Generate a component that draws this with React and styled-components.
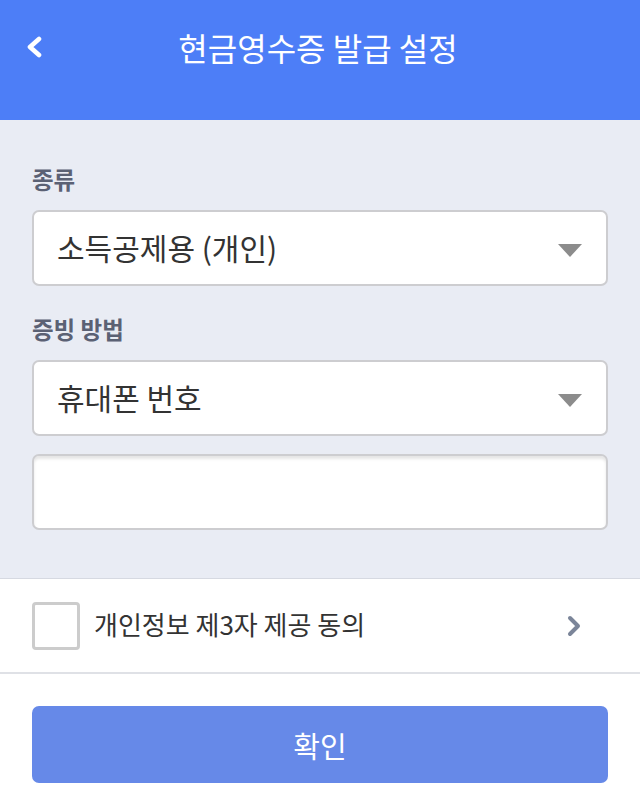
import React from 'react';
import styled, { createGlobalStyle } from 'styled-components';

const GlobalStyle = createGlobalStyle`
  html, body {
    margin: 0;
    padding: 0;
    background: #ffffff;
    font-family: "Noto Sans CJK KR", "Noto Sans", sans-serif;
  }
  * {
    box-sizing: border-box;
  }
`;

export default function App() {
  return (
    <Page>
      <GlobalStyle />
      <Header>
        <HeaderBar>
          <BackButton aria-label="뒤로">
            <svg width="20" height="22" viewBox="0 0 20 22">
              <polyline
                points="14,3 5,11 14,19"
                fill="none"
                stroke="#ffffff"
                strokeWidth="4.6"
                strokeLinecap="round"
                strokeLinejoin="round"
              />
            </svg>
          </BackButton>
          <Title>현금영수증 발급 설정</Title>
          <span />
        </HeaderBar>
      </Header>

      <Form>
        <Label>종류</Label>
        <Select>
          <SelectText>소득공제용 (개인)</SelectText>
          <Caret />
        </Select>

        <Label $spaced>증빙 방법</Label>
        <Select>
          <SelectText>휴대폰 번호</SelectText>
          <Caret />
        </Select>
        <TextInput type="tel" />
      </Form>

      <AgreeRow>
        <CheckBox />
        <AgreeText>개인정보 제3자 제공 동의</AgreeText>
        <svg width="16" height="22" viewBox="0 0 16 22">
          <polyline
            points="4,3 12,11 4,19"
            fill="none"
            stroke="#7b8599"
            strokeWidth="4"
            strokeLinecap="round"
            strokeLinejoin="round"
          />
        </svg>
      </AgreeRow>

      <Footer>
        <ConfirmButton>확인</ConfirmButton>
      </Footer>
    </Page>
  );
}

const Page = styled.div`
  width: 640px;
  min-height: 805px;
  background: #ffffff;
`;

const Header = styled.header`
  height: 120px;
  background-color: #4d7ef7;
`;

const HeaderBar = styled.div`
  height: 94px;
  display: grid;
  grid-template-columns: 1fr auto 1fr;
  align-items: center;
  padding: 0 25px;
`;

const BackButton = styled.button`
  width: 24px;
  height: 28px;
  padding: 0;
  border: none;
  background: none;
  display: flex;
  align-items: center;
  justify-content: flex-start;
`;

const Title = styled.h1`
  margin: 0 0 0 -4px;
  color: #ffffff;
  font-size: 32px;
  font-weight: 400;
`;

const Form = styled.section`
  background-color: #e9ecf4;
  padding: 47px 32px 48px;
  display: flex;
  flex-direction: column;
  border-bottom: 1px solid #d6d9e1;
`;

const Label = styled.label`
  color: #5b6174;
  font-size: 23.5px;
  font-weight: 700;
  line-height: 24px;
  margin: ${props => (props.$spaced ? '31px 0 19px' : '0 0 19px')};
`;

const Field = styled.div`
  height: 76px;
  background: #ffffff;
  border: 2px solid #cdcdd0;
  border-radius: 7px;
`;

const Select = styled(Field)`
  display: flex;
  align-items: center;
  justify-content: space-between;
  padding: 0 24px 0 23px;
`;

const SelectText = styled.span`
  color: #333333;
  font-size: 30px;
  margin-top: -3px;
`;

const Caret = styled.span`
  width: 0;
  height: 0;
  border-left: 12px solid transparent;
  border-right: 12px solid transparent;
  border-top: 13px solid #8c8c8c;
  margin-top: 4px;
`;

const TextInput = styled.input`
  height: 76px;
  margin-top: 18px;
  background: #ffffff;
  border: 2px solid #cdcdd0;
  border-radius: 7px;
  box-shadow: inset 0 3px 3px rgba(0, 0, 0, 0.1);
  font-size: 28px;
  padding: 0 24px;
  outline: none;
`;

const AgreeRow = styled.div`
  height: 95px;
  display: flex;
  align-items: center;
  padding: 0 58px 0 32px;
  border-bottom: 2px solid #dfe1e6;
`;

const CheckBox = styled.span`
  width: 48px;
  height: 48px;
  border: 3px solid #cccccc;
  border-radius: 4px;
  background: #ffffff;
  flex-shrink: 0;
`;

const AgreeText = styled.span`
  flex: 1;
  margin-left: 14px;
  margin-top: -4px;
  color: #333333;
  font-size: 26px;
`;

const Footer = styled.div`
  padding: 32px 32px 20px;
`;

const ConfirmButton = styled.button`
  width: 576px;
  height: 77px;
  border: none;
  border-radius: 7px;
  background-color: #6689e8;
  color: #ffffff;
  font-family: inherit;
  font-size: 29px;
  font-weight: 400;
`;
